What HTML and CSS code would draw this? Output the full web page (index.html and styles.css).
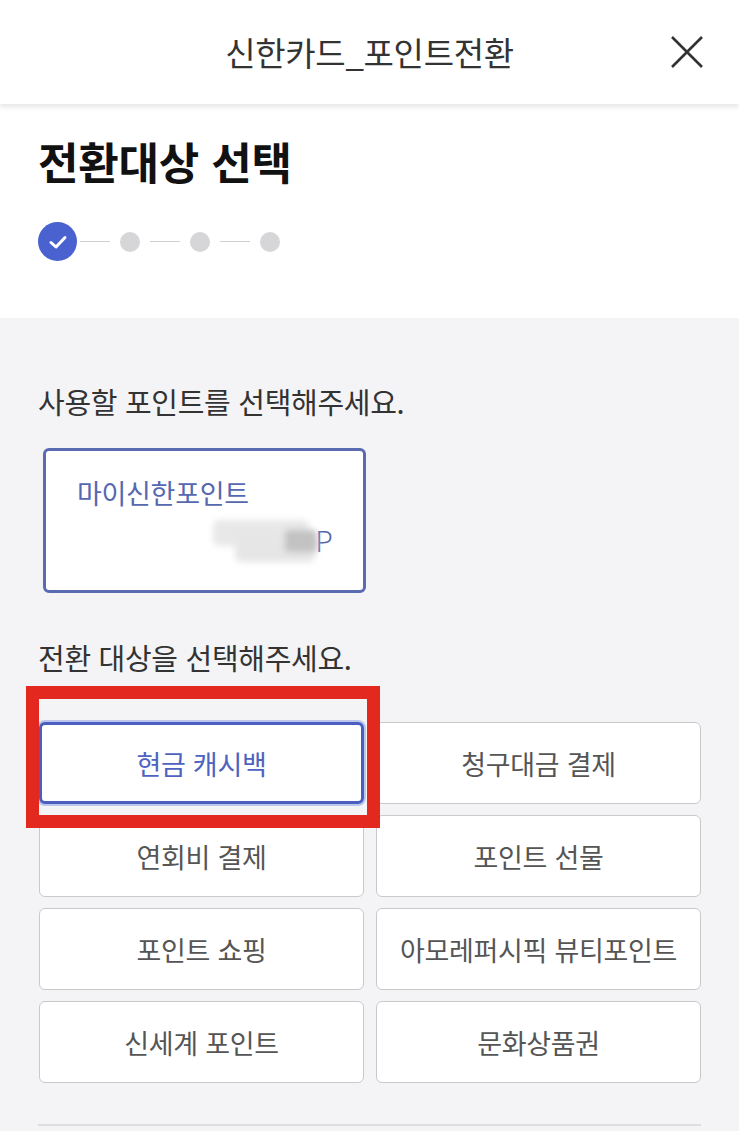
FILE: index.html
```html
<!DOCTYPE html>
<html lang="ko">
<head>
<meta charset="utf-8">
<link rel="stylesheet" href="styles.css">
</head>
<body>
<header class="topbar">
  <h1 class="topbar-title">신한카드_포인트전환</h1>
  <button class="close" aria-label="닫기">
    <svg width="34" height="34" viewBox="0 0 34 34"><path d="M2 2 L32 32 M32 2 L2 32" stroke="#333" stroke-width="2.6" fill="none"/></svg>
  </button>
</header>
<section class="intro">
  <h2 class="page-title">전환대상 선택</h2>
  <div class="stepper">
    <span class="step done">
      <svg width="20" height="16" viewBox="0 0 20 16"><path d="M3 8.5 L8 13 L17 3.5" stroke="#fff" stroke-width="3" fill="none" stroke-linecap="round" stroke-linejoin="round"/></svg>
    </span>
    <span class="line"></span>
    <span class="step"></span>
    <span class="line"></span>
    <span class="step"></span>
    <span class="line"></span>
    <span class="step"></span>
  </div>
</section>
<main class="content">
  <p class="label">사용할 포인트를 선택해주세요.</p>
  <div class="point-card">
    <div class="point-name">마이신한포인트</div>
    <div class="point-amount">
      <span class="blur-wrap"><span class="blur a"></span><span class="blur c"></span><span class="blur b"></span></span><span class="unit">P</span>
    </div>
  </div>
  <p class="label second">전환 대상을 선택해주세요.</p>
  <div class="options">
    <span class="highlight"></span>
    <button class="opt selected">현금 캐시백</button>
    <button class="opt">청구대금 결제</button>
    <button class="opt">연회비 결제</button>
    <button class="opt">포인트 선물</button>
    <button class="opt">포인트 쇼핑</button>
    <button class="opt">아모레퍼시픽 뷰티포인트</button>
    <button class="opt">신세계 포인트</button>
    <button class="opt">문화상품권</button>
  </div>
  <hr class="divider">
</main>
</body>
</html>
```
FILE: styles.css
```css
* { box-sizing: border-box; }
html, body { margin: 0; padding: 0; }
body {
  width: 739px;
  height: 1131px;
  overflow: hidden;
  background: #f4f4f6;
  font-family: "Noto Sans CJK KR", "Noto Sans", sans-serif;
  color: #333;
}
.topbar {
  position: relative;
  z-index: 2;
  height: 104px;
  background: #fff;
  display: flex;
  align-items: center;
  justify-content: center;
  box-shadow: 0 3px 5px rgba(0,0,0,0.10);
}
.topbar-title {
  margin: 0;
  font-size: 33px;
  font-weight: 400;
  color: #333;
  letter-spacing: -0.3px;
}
.close {
  position: absolute;
  right: 35px;
  top: 35px;
  width: 34px;
  height: 34px;
  padding: 0;
  border: 0;
  background: none;
  display: flex;
}
.intro {
  background: #fff;
  height: 214px;
  padding: 27px 38px 0 38px;
}
.page-title {
  margin: 0;
  font-size: 44px;
  line-height: 60px;
  font-weight: 700;
  color: #111;
  letter-spacing: -0.2px;
}
.stepper {
  display: flex;
  align-items: center;
  margin-top: 31px;
}
.step {
  width: 20px;
  height: 20px;
  border-radius: 50%;
  background: #d6d6d8;
}
.step.done {
  width: 39px;
  height: 39px;
  background: #4a62cf;
  display: flex;
  align-items: center;
  justify-content: center;
}
.line {
  width: 30px;
  height: 1.5px;
  background: #d0d0d0;
  margin: 0 10px;
}
.step.done + .line { margin-left: 3px; }
.content {
  padding: 63px 38px 0 38px;
}
.label {
  margin: 0;
  font-size: 29px;
  line-height: 40px;
  color: #333;
  letter-spacing: -0.3px;
}
.point-card {
  width: 323px;
  height: 145px;
  margin: 27px 0 0 5px;
  background: #fff;
  border: 3px solid #5a6bb2;
  border-radius: 6px;
  padding: 24px 30px 0 31px;
}
.point-name {
  font-size: 27px;
  line-height: 36px;
  color: #5668b0;
  letter-spacing: -0.3px;
}
.point-amount {
  display: flex;
  justify-content: flex-end;
  align-items: center;
  margin-top: 8px;
  height: 44px;
}
.blur-wrap {
  position: relative;
  width: 110px;
  height: 46px;
  margin-right: -8px;
}
.blur {
  position: absolute;
  display: block;
  filter: blur(3px);
}
.blur.a {
  left: 0; top: 2px; width: 96px; height: 26px;
  background: #e8e8e8;
  border-radius: 6px;
}
.blur.c {
  left: 22px; top: 18px; width: 80px; height: 26px;
  background: #e6e6e6;
  border-radius: 6px;
}
.blur.b {
  left: 72px; top: 12px; width: 32px; height: 22px;
  background: #c2c2c2;
  border-radius: 4px;
}
.unit {
  font-size: 30px;
  color: #5668b0;
  line-height: 1;
  font-family: "Noto Sans", sans-serif;
  font-weight: 300;
}
.label.second { margin-top: 44px; }
.options {
  position: relative;
  display: grid;
  grid-template-columns: 325px 325px;
  grid-auto-rows: 82px;
  column-gap: 12px;
  row-gap: 11px;
  margin-top: 45px;
  margin-left: 1px;
}
.opt {
  background: #fff;
  border: 1.5px solid #c9c9cb;
  border-radius: 6px;
  font-family: inherit;
  font-size: 27px;
  color: #555;
  padding: 0;
  margin: 0;
  letter-spacing: -0.3px;
}
.opt.selected {
  border: 3px solid #4a5fc0;
  color: #4d63bf;
  box-shadow: 0 0 0 2px rgba(120,140,220,0.45);
}
.highlight {
  position: absolute;
  left: -13px;
  top: -36px;
  width: 354px;
  height: 142px;
  border: 13px solid #e3281f;
  z-index: 1;
  pointer-events: none;
}
.divider {
  border: 0;
  height: 2px;
  background: #dedee0;
  margin: 41px 0 0 0;
}
```
